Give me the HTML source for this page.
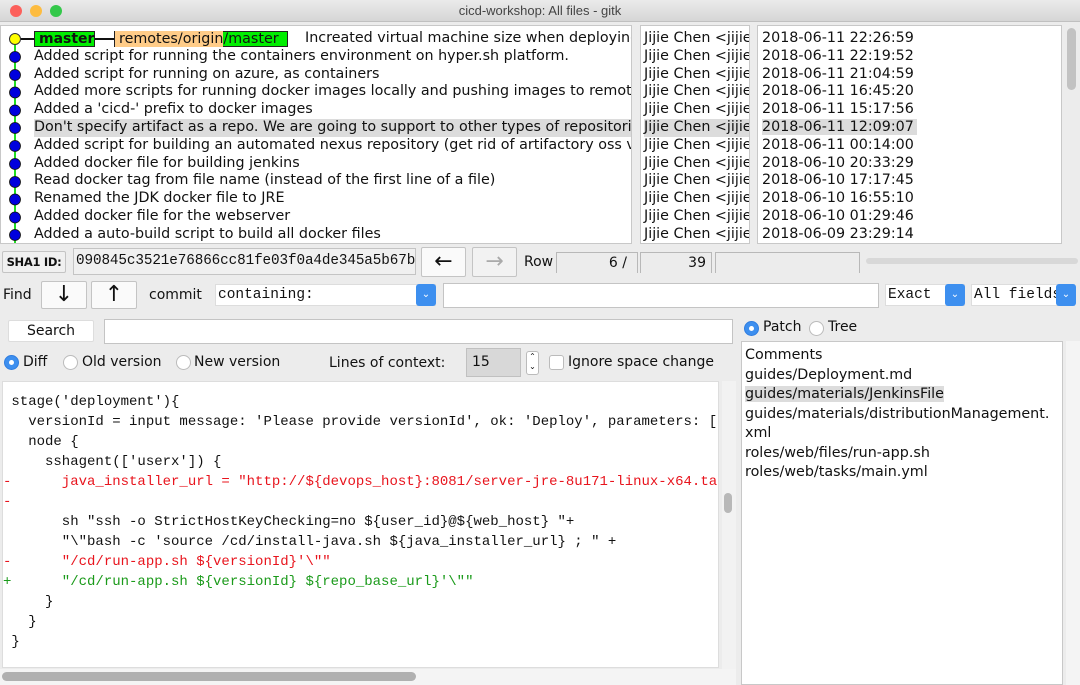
<!DOCTYPE html>
<html><head><meta charset="utf-8"><style>
*{margin:0;padding:0;box-sizing:border-box}
body{width:1080px;height:685px;overflow:hidden;background:#ececec;font-family:"DejaVu Sans","Liberation Sans",sans-serif;font-size:14px;color:#111;position:relative}
.a{position:absolute;white-space:nowrap}
.title{left:0;top:0;width:1080px;height:22px;background:linear-gradient(#ebebeb,#d6d6d6);border-bottom:1px solid #c0c0c0;text-align:center;font-size:13px;line-height:22px;color:#444;font-family:"Liberation Sans",sans-serif}
.dot{top:5px;width:12px;height:12px;border-radius:50%}
.pane{background:#fff;border:1px solid #c8c8c8;overflow:hidden;white-space:nowrap}
.rows div{height:17.8px;line-height:17.8px;font-size:14.3px}
.sel{background:#dcdcdc}
.btn{background:#fafafa;border:1px solid #c4c4c4;border-radius:2px;text-align:center}
.inp{background:#fff;border:1px solid #c4c4c4}
.radio{width:15px;height:15px;border-radius:50%;background:#fff;border:1px solid #bbb}
.radio.on{background:#3d8fef;border-color:#2f7de0}
.radio.on:after{content:"";position:absolute;left:4px;top:4px;width:5px;height:5px;border-radius:50%;background:#fff}
.code div{height:20px;line-height:20px;font-family:"Liberation Mono",monospace;font-size:14px;white-space:pre}
.r{color:#e8141d}.g{color:#1a9a1a}
.dd{width:20px;height:22px;background:#3d8fef;border-radius:3px;color:#fff;font-size:10px;text-align:center;line-height:22px}
</style></head><body>
<div class="a title">cicd-workshop: All files - gitk</div>
<div class="a dot" style="left:10px;background:#fc605b"></div>
<div class="a dot" style="left:30px;background:#fdbc40"></div>
<div class="a dot" style="left:50px;background:#34c84a"></div>

<div class="a pane" style="left:0;top:25px;width:632px;height:219px">
 <div class="a" style="left:13px;top:13px;width:2px;height:210px;background:#22dd22"></div>
 <div class="a" style="left:8px;top:7px;width:12px;height:12px;border-radius:50%;background:#ffff00;border:1px solid #333"></div>
 <div class="a" style="left:20px;top:12px;width:14px;height:2px;background:#111"></div>
 <div class="a" style="left:33px;top:5px;width:61px;height:16px;background:#00ee00;border:1px solid #222;font-weight:bold;line-height:14px;padding-left:4px">master</div>
 <div class="a" style="left:94px;top:12px;width:20px;height:2px;background:#111"></div>
 <div class="a" style="left:113px;top:5px;width:174px;height:16px;background:#00ee00;border:1px solid #222;line-height:14px;font-size:14.3px"><span style="background:#ffcc88;padding:0 0 0 4px">remotes/origin</span>/master</div>
 <div class="a rows" style="left:33px;top:4px;width:600px">
  <div style="padding-left:271px">Increated virtual machine size when deploying</div>
  <div>Added script for running the containers environment on hyper.sh platform.</div>
  <div>Added script for running on azure, as containers</div>
  <div>Added more scripts for running docker images locally and pushing images to remote</div>
  <div>Added a 'cicd-' prefix to docker images</div>
  <div class="sel">Don't specify artifact as a repo. We are going to support to other types of repositories</div>
  <div>Added script for building an automated nexus repository (get rid of artifactory oss v</div>
  <div>Added docker file for building jenkins</div>
  <div>Read docker tag from file name (instead of the first line of a file)</div>
  <div>Renamed the JDK docker file to JRE</div>
  <div>Added docker file for the webserver</div>
  <div>Added a auto-build script to build all docker files</div>
 </div>
 <div class="a" style="left:8px;top:0;width:12px">
  <svg width="12" height="219"><g fill="#0000dd" stroke="#111" stroke-width="0.8">
  <circle cx="6" cy="31" r="5.5"/><circle cx="6" cy="49" r="5.5"/><circle cx="6" cy="66.5" r="5.5"/><circle cx="6" cy="84.5" r="5.5"/><circle cx="6" cy="102" r="5.5"/><circle cx="6" cy="120" r="5.5"/><circle cx="6" cy="138" r="5.5"/><circle cx="6" cy="156" r="5.5"/><circle cx="6" cy="173.5" r="5.5"/><circle cx="6" cy="191.5" r="5.5"/><circle cx="6" cy="209" r="5.5"/></g></svg>
 </div>
</div>
<div class="a pane rows" style="left:640px;top:25px;width:110px;height:219px;padding:4px 0 0 3px">
 <div>Jijie Chen &lt;jijie</div><div>Jijie Chen &lt;jijie</div><div>Jijie Chen &lt;jijie</div><div>Jijie Chen &lt;jijie</div><div>Jijie Chen &lt;jijie</div><div class="sel">Jijie Chen &lt;jijie</div><div>Jijie Chen &lt;jijie</div><div>Jijie Chen &lt;jijie</div><div>Jijie Chen &lt;jijie</div><div>Jijie Chen &lt;jijie</div><div>Jijie Chen &lt;jijie</div><div>Jijie Chen &lt;jijie</div>
</div>
<div class="a pane rows" style="left:757px;top:25px;width:305px;height:219px;padding:4px 0 0 4px">
 <div>2018-06-11 22:26:59</div><div>2018-06-11 22:19:52</div><div>2018-06-11 21:04:59</div><div>2018-06-11 16:45:20</div><div>2018-06-11 15:17:56</div><div><span class="sel" style="padding-right:3px">2018-06-11 12:09:07</span></div><div>2018-06-11 00:14:00</div><div>2018-06-10 20:33:29</div><div>2018-06-10 17:17:45</div><div>2018-06-10 16:55:10</div><div>2018-06-10 01:29:46</div><div>2018-06-09 23:29:14</div>
</div>
<div class="a" style="left:1067px;top:28px;width:9px;height:62px;background:#c2c2c2;border-radius:5px"></div>

<div class="a btn" style="left:2px;top:251px;width:64px;height:22px;font-size:11.5px;font-weight:bold;line-height:20px;background:#f0f0f0;letter-spacing:-0.3px">SHA1 ID:</div>
<div class="a inp" style="left:73px;top:248px;width:343px;height:27px;font-family:'Liberation Mono',monospace;font-size:14.3px;line-height:25px;padding-left:2px;background:#f0f0f0;overflow:hidden;letter-spacing:-0.1px">090845c3521e76866cc81fe03f0a4de345a5b67b</div>
<div class="a btn" style="left:421px;top:247px;width:45px;height:30px;font-size:22px;line-height:27px">←</div>
<div class="a btn" style="left:472px;top:247px;width:45px;height:30px;font-size:22px;line-height:27px;color:#aaa;background:#f2f2f2">→</div>
<div class="a" style="left:524px;top:254px">Row</div>
<div class="a" style="left:556px;top:252px;width:82px;height:21px;border:1px solid #b8b8b8;border-bottom:none;text-align:right;padding-right:10px;line-height:20px">6 /</div>
<div class="a" style="left:640px;top:252px;width:72px;height:21px;border:1px solid #b8b8b8;border-bottom:none;text-align:right;padding-right:5px;line-height:20px">39</div>
<div class="a" style="left:715px;top:252px;width:145px;height:21px;border:1px solid #b8b8b8;border-bottom:none"></div>
<div class="a" style="left:866px;top:258px;width:212px;height:6px;background:#d8d8d8;border-radius:3px"></div>

<div class="a" style="left:3px;top:287px">Find</div>
<div class="a btn" style="left:41px;top:281px;width:46px;height:28px;font-size:22px;line-height:26px">↓</div>
<div class="a btn" style="left:91px;top:281px;width:46px;height:28px;font-size:22px;line-height:26px">↑</div>
<div class="a" style="left:149px;top:287px">commit</div>
<div class="a inp" style="left:215px;top:284px;width:221px;height:22px;font-family:'Liberation Mono',monospace;font-size:14.5px;line-height:21px;padding-left:2px;border-color:#ddd">containing:</div>
<div class="a dd" style="left:416px;top:284px">⌄</div>
<div class="a inp" style="left:443px;top:283px;width:436px;height:25px"></div>
<div class="a inp" style="left:885px;top:284px;width:80px;height:22px;font-family:'Liberation Mono',monospace;font-size:14.5px;line-height:21px;padding-left:2px;border-color:#ddd">Exact</div>
<div class="a dd" style="left:945px;top:284px">⌄</div>
<div class="a inp" style="left:971px;top:284px;width:104px;height:22px;font-family:'Liberation Mono',monospace;font-size:14.5px;line-height:21px;padding-left:2px;border-color:#ddd;overflow:hidden">All fields</div>
<div class="a dd" style="left:1056px;top:284px">⌄</div>

<div class="a btn" style="left:8px;top:320px;width:86px;height:22px;line-height:20px;border-color:#ddd;background:#fff">Search</div>
<div class="a inp" style="left:104px;top:319px;width:629px;height:25px"></div>

<div class="a radio on" style="left:4px;top:355px"></div><div class="a" style="left:23px;top:354px">Diff</div>
<div class="a radio" style="left:63px;top:355px"></div><div class="a" style="left:82px;top:354px">Old version</div>
<div class="a radio" style="left:176px;top:355px"></div><div class="a" style="left:194px;top:354px">New version</div>
<div class="a" style="left:329px;top:355px">Lines of context:</div>
<div class="a" style="left:466px;top:348px;width:55px;height:29px;background:#d8d8d8;border:1px solid #c0c0c0;line-height:27px;padding-left:5px">15</div>
<div class="a" style="left:526px;top:351px;width:13px;height:24px;background:#fff;border:1px solid #bbb;border-radius:3px;font-size:8px;line-height:10px;text-align:center;white-space:normal">⌃<br>⌄</div>
<div class="a" style="left:549px;top:355px;width:15px;height:15px;background:#fff;border:1px solid #bbb;border-radius:3px"></div>
<div class="a" style="left:568px;top:354px">Ignore space change</div>

<div class="a pane code" style="left:2px;top:381px;width:717px;height:287px;padding:10px 0 0 0;border-color:#ddd">
 <div> stage('deployment'){</div>
 <div>   versionId = input message: 'Please provide versionId', ok: 'Deploy', parameters: [</div>
 <div>   node {</div>
 <div>     sshagent(['userx']) {</div>
 <div class="r">-      java_installer_url = "http://${devops_host}:8081/server-jre-8u171-linux-x64.tar</div>
 <div class="r">-</div>
 <div>       sh "ssh -o StrictHostKeyChecking=no ${user_id}@${web_host} "+</div>
 <div>       "\"bash -c 'source /cd/install-java.sh ${java_installer_url} ; " +</div>
 <div class="r">-      "/cd/run-app.sh ${versionId}'\""</div>
 <div class="g">+      "/cd/run-app.sh ${versionId} ${repo_base_url}'\""</div>
 <div>     }</div>
 <div>   }</div>
 <div> }</div>
</div>
<div class="a" style="left:0;top:669px;width:736px;height:16px;background:#f4f4f4"></div>
<div class="a" style="left:2px;top:672px;width:414px;height:9px;background:#b0b0b0;border-radius:5px"></div>
<div class="a" style="left:722px;top:381px;width:14px;height:288px;background:#f2f2f2"></div>
<div class="a" style="left:724px;top:493px;width:8px;height:20px;background:#b8b8b8;border-radius:4px"></div>

<div class="a radio on" style="left:744px;top:321px"></div><div class="a" style="left:763px;top:319px">Patch</div>
<div class="a radio" style="left:809px;top:321px"></div><div class="a" style="left:828px;top:319px">Tree</div>
<div class="a pane" style="left:741px;top:341px;width:322px;height:344px;padding:4px 0 0 3px;white-space:normal;line-height:19.5px;font-size:14.3px">
 <div>Comments</div>
 <div>guides/Deployment.md</div>
 <div><span class="sel">guides/materials/JenkinsFile</span></div>
 <div>guides/materials/distributionManagement.<br>xml</div>
 <div>roles/web/files/run-app.sh</div>
 <div>roles/web/tasks/main.yml</div>
</div>
<div class="a" style="left:1066px;top:341px;width:14px;height:344px;background:#f4f4f4"></div>
</body></html>
